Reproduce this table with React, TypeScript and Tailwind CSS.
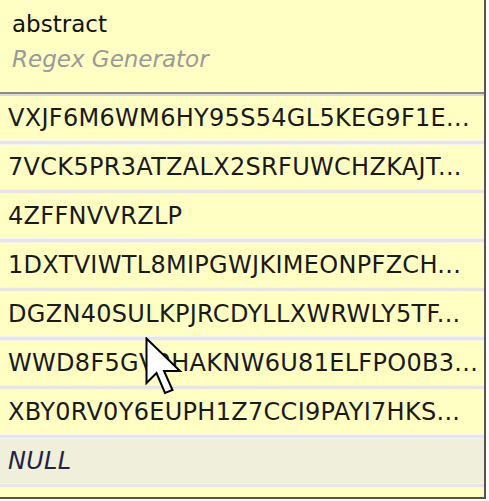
const rows = [
  "VXJF6M6WM6HY95S54GL5KEG9F1E...",
  "7VCK5PR3ATZALX2SRFUWCHZKAJT...",
  "4ZFFNVVRZLP",
  "1DXTVIWTL8MIPGWJKIMEONPFZCH...",
  "DGZN40SULKPJRCDYLLXWRWLY5TF...",
  "WWD8F5GV9HAKNW6U81ELFPO0B3...",
  "XBY0RV0Y6EUPH1Z7CCI9PAYI7HKS...",
];

function Sep() {
  return <div className="h-[5px] bg-[#e6e6e6] border-t border-b border-[#f4f4f4]" />;
}

export default function App() {
  return (
    <div className="relative w-[489px] h-[501px] bg-white overflow-hidden" style={{ fontFamily: '"DejaVu Sans", Verdana, sans-serif' }}>
      <div className="w-[486px] h-[499px] bg-[#ffffc4] border-r-2 border-b-2 border-[#555555] overflow-hidden">
        {/* header */}
        <div className="h-[92px] px-3 pt-[10px]">
          <div className="text-[23px] leading-[29px] text-[#111111]">abstract</div>
          <div className="mt-[6px] text-[23px] leading-[29px] italic text-[#9a9a9a]">Regex Generator</div>
        </div>
        <div className="h-[2px] bg-[#8a8a8a]" />
        <div className="h-[2px] bg-[#d8d8d8]" />
        {rows.map((r) => (
          <div key={r}>
            <div className="h-[44px] flex items-center pl-2 text-[24px] tracking-[0.3px] text-[#1a1a1a] whitespace-nowrap">
              {r}
            </div>
            <Sep />
          </div>
        ))}
        <div className="h-[44px] flex items-center pl-2 text-[24px] tracking-[0.3px] italic text-[#222244] bg-[#efefdc]">NULL</div>
        <Sep />
        <div className="h-[10px]" />
      </div>
      {/* mouse cursor */}
      <svg className="absolute left-[145px] top-[337px]" width="40" height="60" viewBox="0 0 40 60">
        <path d="M1.5 1.5 L1.5 46 L11.5 36 L20 56 L27.5 53 L19 34 L35 34 Z" fill="white" stroke="black" strokeWidth="2" strokeLinejoin="miter" />
      </svg>
    </div>
  );
}
